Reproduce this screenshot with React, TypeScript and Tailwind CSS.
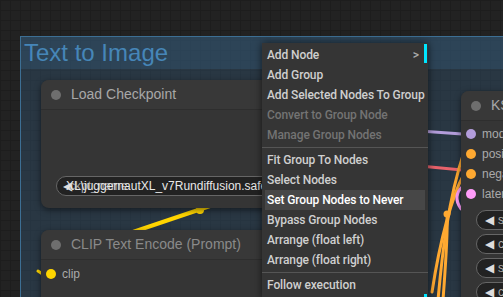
const menuItems: { label: string; disabled?: boolean; active?: boolean; sep?: boolean; sub?: boolean }[] = [
  { label: 'Add Node', sub: true },
  { label: 'Add Group' },
  { label: 'Add Selected Nodes To Group' },
  { label: 'Convert to Group Node', disabled: true },
  { label: 'Manage Group Nodes', disabled: true, sep: true },
  { label: 'Fit Group To Nodes' },
  { label: 'Select Nodes' },
  { label: 'Set Group Nodes to Never', active: true },
  { label: 'Bypass Group Nodes' },
  { label: 'Arrange (float left)' },
  { label: 'Arrange (float right)', sep: true },
  { label: 'Follow execution' },
];

const ksInputs = [
  { label: 'model', color: 'bg-[#b39ddb]' },
  { label: 'positive', color: 'bg-[#ffa931]' },
  { label: 'negative', color: 'bg-[#ffa931]' },
  { label: 'latent_image', color: 'bg-[#ff9cf9]' },
];

const ksWidgets = ['seed', 'control_after_generate', 'steps', 'cfg'];

function Links() {
  return (
    <svg className="absolute inset-0" width="503" height="297" fill="none" strokeLinecap="round">
      <path d="M133 232 L210 206" stroke="#ffd500" strokeWidth="4" />
      <circle cx="200" cy="210" r="4" fill="#ffd500" />
      <path d="M38 271 L44 275" stroke="#ffd500" strokeWidth="3" />
      <path d="M420 131 L462 134" stroke="#b39ddb" strokeWidth="3" />
      <path d="M420 166 L462 170" stroke="#e8626b" strokeWidth="3" />
      <path d="M438 300 C442 255, 448 200, 464 152" stroke="#ffa931" strokeWidth="3" />
      <path d="M432 292 C440 240, 452 196, 464 174" stroke="#ffa931" strokeWidth="3" />
      <path d="M443 300 C446 260, 448 230, 447 214" stroke="#ffa931" strokeWidth="3" />
      <circle cx="447" cy="214" r="3.5" fill="#ffa931" />
      <path d="M463 186 Q452 196 461 209" stroke="#ff9cf9" strokeWidth="3" />
    </svg>
  );
}

function NodeTitle({ title, dim }: { title: string; dim?: boolean }) {
  return (
    <div className="flex h-[30px] items-center gap-[10px] border-b border-[#2e2e2e] bg-[#383838] pl-[10px]">
      <span className="h-[10px] w-[10px] shrink-0 rounded-full bg-[#6e6e6e]" />
      <span className={`text-[14px] whitespace-nowrap ${dim ? 'text-[#8a8a8a]' : 'text-[#a8a8a8]'}`}>{title}</span>
    </div>
  );
}

export default function App() {
  return (
    <div className="relative h-[297px] w-[503px] overflow-hidden bg-[#222222] bg-[linear-gradient(#1d1d1d_1px,transparent_1px),linear-gradient(90deg,#1d1d1d_1px,transparent_1px)] bg-[size:10px_10px] font-['Liberation_Sans',Arial,sans-serif]">
      {/* group */}
      <div className="absolute left-[20px] top-[36px] h-[300px] w-[520px] border border-[#3d6f94] bg-[#3a6a92]/30">
        <div className="flex h-[32px] items-center bg-[#3a6a92]/25 pl-[3px] text-[24px] leading-none text-[#4686b8]">
          Text to Image
        </div>
      </div>

      <Links />

      {/* Load Checkpoint */}
      <div className="absolute left-[41px] top-[80px] flex h-[128px] w-[270px] flex-col overflow-hidden rounded-[8px] bg-[#353535] shadow-[0_2px_6px_rgba(0,0,0,0.5)]">
        <NodeTitle title="Load Checkpoint" />
        <div className="relative mt-[66px] ml-[15px] h-[20px] w-[260px] rounded-full border border-[#666] bg-[#222]">
          <span className="absolute left-[6px] top-[2px] text-[12px] leading-[14px] text-[#ddd]">◀</span>
          <span className="absolute left-[12px] top-[2px] text-[12px] leading-[14px] text-[#aaa]">ckpt_name</span>
          <span className="absolute left-[9px] top-[2px] whitespace-nowrap text-[12px] leading-[14px] text-[#e8e8e8]">
            XL\juggernautXL_v7Rundiffusion.safetensors
          </span>
        </div>
      </div>

      {/* CLIP Text Encode */}
      <div className="absolute left-[41px] top-[230px] flex h-[100px] w-[270px] flex-col overflow-hidden rounded-[8px] bg-[#353535] shadow-[0_2px_6px_rgba(0,0,0,0.5)]">
        <NodeTitle title="CLIP Text Encode (Prompt)" dim />
        <div className="mt-[5px] flex h-[18px] items-center gap-[6px] pl-[5px]">
          <span className="h-[10px] w-[10px] rounded-full bg-[#ffd500]" />
          <span className="text-[12px] text-[#aaa]">clip</span>
        </div>
      </div>

      {/* KSampler */}
      <div className="absolute left-[461px] top-[91px] flex h-[240px] w-[200px] flex-col overflow-hidden rounded-[8px] bg-[#353535] shadow-[0_2px_6px_rgba(0,0,0,0.5)]">
        <NodeTitle title="KSampler" />
        <div className="flex flex-col pt-[3px]">
          {ksInputs.map((inp) => (
            <div key={inp.label} className="flex h-[20px] items-center gap-[6px] pl-[5px]">
              <span className={`h-[10px] w-[10px] rounded-full ${inp.color}`} />
              <span className="text-[12px] text-[#aaa]">{inp.label}</span>
            </div>
          ))}
        </div>
        <div className="mt-[6px] flex flex-col gap-[4px] pl-[15px]">
          {ksWidgets.map((w) => (
            <div key={w} className="flex h-[20px] items-center gap-[4px] rounded-full border border-[#666] bg-[#222] pl-[8px] text-[12px]">
              <span className="text-[#ddd]">◀</span>
              <span className="text-[#aaa]">{w}</span>
            </div>
          ))}
        </div>
      </div>

      {/* context menu */}
      <div className="absolute left-[262px] top-[43px] w-[166px] bg-[#353535] pt-[2px] pb-[4px] shadow-[0_0_8px_rgba(0,0,0,0.6)] font-['Roboto',sans-serif]">
        {menuItems.map((it) => (
          <div key={it.label}>
            <div
              className={`mx-[3px] flex h-[20px] items-center justify-between pl-[2px] pr-[6px] text-[12px] tracking-[-0.1px] font-medium whitespace-nowrap ${
                it.active ? 'bg-[#474747] font-bold text-white' : it.disabled ? 'text-[#737373]' : 'text-[#cfcfcf]'
              }`}
            >
              <span>{it.label}</span>
              {it.sub && <span className="text-[#aaa]">&gt;</span>}
            </div>
            {it.sep && <div className="my-[2px] h-px bg-[#555]" />}
          </div>
        ))}
        <div className="absolute left-[162px] top-[1px] h-[19px] w-[3px] bg-[#00e5ff]" />
      </div>
      <div className="absolute left-[424px] top-[294px] h-[3px] w-[3px] bg-[#00e5ff]" />
    </div>
  );
}
